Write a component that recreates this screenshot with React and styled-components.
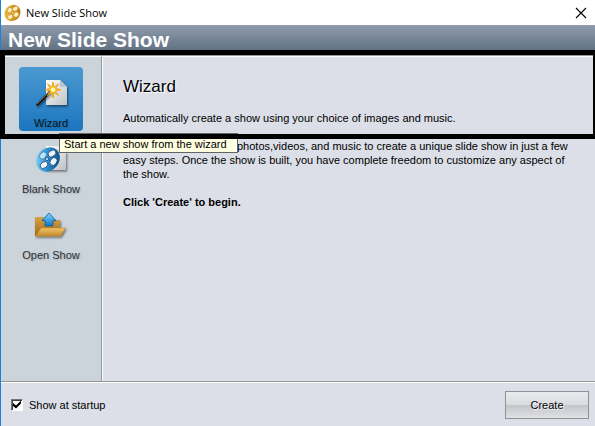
import React, { useState } from "react";
import styled, { createGlobalStyle } from "styled-components";

const Global = createGlobalStyle`
  * { box-sizing: border-box; }
  body { margin: 0; background: #dcdfe7; }
  button, input { font: inherit; }
`;

const Window = styled.div`
  min-height: 100vh;
  display: flex;
  flex-direction: column;
  border-left: 1px solid #1883d7;
  background: #dcdfe7;
  color: #000;
  font: 11px/14px "Liberation Sans", Arial, sans-serif;
`;

const TitleBar = styled.header`
  display: flex;
  align-items: center;
  height: 25px;
  padding: 0 8px 0 3px;
  gap: 5px;
  background: #fff;
  font: 11px/16px "Open Sans", "Noto Sans", sans-serif;
`;

const TitleText = styled.span`
  flex: 1;
`;

const CloseButton = styled.button`
  display: flex;
  padding: 0;
  border: 0;
  background: none;
`;

const Banner = styled.h1`
  margin: 0;
  height: 30px;
  padding: 2px 7px 0;
  background: linear-gradient(#8f9cac, #627284 25px);
  color: #fff;
  font-size: 21px;
  line-height: 26px;
`;

const Body = styled.div`
  position: relative;
  flex: 1;
  display: flex;
  border-top: 1px solid #969696;
  border-bottom: 1px solid #969696;
`;

const Sidebar = styled.nav`
  display: flex;
  flex-direction: column;
  align-items: center;
  gap: 2px;
  width: 101px;
  padding-top: 10px;
  border-top: 1px solid #fff;
  border-right: 1px solid #969696;
  background: #cbd3db;
`;

const NavButton = styled.button`
  display: flex;
  flex-direction: column;
  align-items: center;
  justify-content: space-between;
  width: 64px;
  height: 64px;
  padding: 11px 0 1px;
  border: 0;
  border-radius: 4px;
  background: ${(p) => (p.$active ? "linear-gradient(#4b99d2, #1b76bf)" : "none")};
  color: ${(p) => (p.$active ? "#0a1420" : "#2c3034")};
  white-space: nowrap;
  text-shadow: 1px 1px 2px rgba(0, 0, 0, 0.2);
`;

const Content = styled.main`
  flex: 1;
  padding: 20px 20px 0;
  border-top: 1px solid #fff;
  border-left: 1px solid #fff;
`;

const Heading = styled.h2`
  margin: 0;
  font-size: 17px;
  font-weight: 400;
  line-height: 20px;
  text-shadow: 1px 1px 1px #fff;
`;

const Paragraph = styled.p`
  margin: 14px 0 0;
  text-indent: ${(p) => p.$indent || 0}px;
  font-weight: ${(p) => (p.$strong ? 700 : 400)};
`;

const Highlight = styled.div`
  position: absolute;
  top: -6px;
  left: -1px;
  right: 0;
  height: 89px;
  border: 5px solid #000;
  border-right-width: 2px;
  pointer-events: none;
`;

const Tooltip = styled.div`
  position: absolute;
  top: 77px;
  left: 58px;
  min-width: 179px;
  height: 20px;
  padding: 3px 4px 0;
  border: 1px solid #646464;
  background: #ffffe1;
  white-space: nowrap;
`;

const Footer = styled.footer`
  display: flex;
  align-items: center;
  justify-content: space-between;
  height: 44px;
  padding: 0 6px 0 10px;
  border-top: 1px solid #fff;
`;

const CheckLabel = styled.label`
  display: flex;
  align-items: center;
  gap: 6px;
`;

const CheckBox = styled.input`
  appearance: none;
  width: 12px;
  height: 12px;
  margin: 0;
  border: 1px solid;
  border-color: #777 #fff #fff #777;
  outline: 0;
  background: #fff;
  box-shadow: inset 1px 1px #404040;
  display: grid;
  place-items: center;
  &:checked::before {
    content: "";
    width: 8px;
    height: 8px;
    background: #000;
    clip-path: polygon(0 30%, 38% 62%, 100% 0, 100% 38%, 38% 100%, 0 68%);
  }
`;

const CreateButton = styled.button`
  width: 84px;
  height: 28px;
  padding: 0;
  border: 1px solid #8e9297;
  background: linear-gradient(#e9eaed, #d9dbdf 50%, #c3c5ca 51%, #dfe1e5);
  text-shadow: 1px 1px 1px #fff;
`;

function ReelIcon() {
  return (
    <svg width="17" height="18" viewBox="0 0 17 18" aria-hidden="true">
      <defs>
        <linearGradient id="gold" x1="0" y1="0" x2="1" y2="1">
          <stop offset="0" stopColor="#f6c64a" />
          <stop offset="1" stopColor="#b06c0a" />
        </linearGradient>
      </defs>
      <ellipse cx="8.5" cy="9" rx="8.6" ry="7.6" transform="rotate(-50 8.5 9)" fill="url(#gold)" />
      <g fill="#fff0bd" stroke="#d2932a" strokeWidth=".4">
        <ellipse cx="5.8" cy="6.2" rx="2.1" ry="2.6" transform="rotate(35 5.8 6.2)" />
        <ellipse cx="11.3" cy="4.7" rx="2.8" ry="2.1" transform="rotate(-30 11.3 4.7)" />
        <ellipse cx="12.2" cy="10.6" rx="2.2" ry="2.7" transform="rotate(35 12.2 10.6)" />
        <ellipse cx="6.3" cy="12.8" rx="2.7" ry="2.1" transform="rotate(-30 6.3 12.8)" />
        <circle cx="8.8" cy="8.8" r=".9" />
      </g>
    </svg>
  );
}

function PagePaths({ x, y, w, h }) {
  return (
    <g filter="url(#shade)">
      <path d={`M${x} ${y}h${w - 7}l7 7v${h - 7}h-${w}z`} fill="url(#paper)" />
      <path d={`M${x + w - 7} ${y}v7h7z`} fill="#b9c4cf" />
    </g>
  );
}

function WizardIcon() {
  return (
    <svg width="36" height="32" viewBox="0 0 36 32" aria-hidden="true">
      <defs>
        <linearGradient id="paper" x1="0" y1="0" x2="1" y2="1">
          <stop offset="0" stopColor="#fff" />
          <stop offset="1" stopColor="#bfc1c3" />
        </linearGradient>
        <filter id="shade" x="-30%" y="-30%" width="170%" height="170%">
          <feDropShadow dx="1" dy="1.5" stdDeviation="1" floodOpacity=".5" />
        </filter>
      </defs>
      <PagePaths x={13} y={2} w={21} h={25} />
      <path d="M4.500 26.500 17 14" stroke="#161616" strokeWidth="2.600" strokeLinecap="round" filter="url(#shade)" />
      <path d="M4 26 16 14" stroke="#858585" strokeWidth=".8" />
      <path
        d="M20 4l1 5.200 4.500-3.200-2.900 4.500 5.400 1.200-5.400 1.200 2.900 4.600-4.500-3.200L20 20l-1-5.700-4.500 3.200 2.900-4.600-5.400-1.200 5.400-1.200L14.500 6 19 9.200z"
        fill="#fdc52c"
        stroke="#eda014"
        strokeWidth=".9"
      />
      <circle cx="20" cy="11.700" r="2.300" fill="#fff9b8" />
    </svg>
  );
}

function BlankIcon() {
  return (
    <svg width="36" height="32" viewBox="0 0 36 32" aria-hidden="true">
      <defs>
        <linearGradient id="blue" x1=".1" y1="0" x2=".9" y2="1">
          <stop offset="0" stopColor="#9adbf8" />
          <stop offset=".45" stopColor="#2f94d4" />
          <stop offset="1" stopColor="#063f7c" />
        </linearGradient>
      </defs>
      <PagePaths x={13} y={2} w={20} h={24} />
      <ellipse cx="15" cy="15.500" rx="13" ry="11" transform="rotate(-50 15 15.500)" fill="url(#blue)" />
      <ellipse cx="10" cy="11.500" rx="3" ry="4" transform="rotate(40 10 11.500)" fill="#bfe2f3" stroke="#1c74b4" strokeWidth=".7" />
      <g fill="#f1f3f5" stroke="#0b4c85" strokeWidth=".8">
        <ellipse cx="19" cy="9.500" rx="4.200" ry="3" transform="rotate(-35 19 9.500)" />
        <ellipse cx="20.500" cy="17.500" rx="3.200" ry="4.200" transform="rotate(35 20.500 17.500)" />
        <ellipse cx="11" cy="21" rx="4.200" ry="3" transform="rotate(-35 11 21)" />
      </g>
      <circle cx="14" cy="15" r="1.700" fill="#b7cfdd" stroke="#17568c" strokeWidth=".8" />
    </svg>
  );
}

function OpenIcon() {
  return (
    <svg width="36" height="32" viewBox="0 0 36 32" aria-hidden="true">
      <defs>
        <linearGradient id="folder" x1="0" y1="0" x2="0" y2="1">
          <stop offset="0" stopColor="#efc568" />
          <stop offset="1" stopColor="#c48a2c" />
        </linearGradient>
        <linearGradient id="back" x1="0" y1="0" x2="0" y2="1">
          <stop offset="0" stopColor="#d9a343" />
          <stop offset="1" stopColor="#9c681a" />
        </linearGradient>
        <linearGradient id="arrow" x1="0" y1="0" x2="0" y2="1">
          <stop offset="0" stopColor="#7ddcff" />
          <stop offset="1" stopColor="#1272c0" />
        </linearGradient>
      </defs>
      <g filter="url(#shade)">
        <path d="M2 7h8l2 3h15v16H2z" fill="url(#back)" />
        <path d="M2.500 26 8 18h24.500l-5 8z" fill="url(#folder)" stroke="#b57c22" strokeWidth=".5" />
      </g>
      <path d="m16 3 7 7.500h-3V16h-8v-5.500H9z" fill="url(#arrow)" stroke="#075a9c" strokeWidth=".8" />
    </svg>
  );
}

const shows = [
  { name: "Wizard", Icon: WizardIcon },
  { name: "Blank Show", Icon: BlankIcon },
  { name: "Open Show", Icon: OpenIcon },
];

export default function App() {
  const [startup, setStartup] = useState(true);
  return (
    <>
      <Global />
      <Window>
        <TitleBar>
          <ReelIcon />
          <TitleText>New Slide Show</TitleText>
          <CloseButton aria-label="Close">
            <svg width="12" height="12" viewBox="0 0 12 12" stroke="#000" strokeWidth="1.100">
              <path d="m1 1 10 10M11 1 1 11" />
            </svg>
          </CloseButton>
        </TitleBar>
        <Banner>New Slide Show</Banner>
        <Body>
          <Sidebar>
            {shows.map(({ name, Icon }) => (
              <NavButton key={name} $active={name === "Wizard"}>
                <Icon />
                {name}
              </NavButton>
            ))}
          </Sidebar>
          <Content>
            <Heading>Wizard</Heading>
            <Paragraph>Automatically create a show using your choice of images and music.</Paragraph>
            <Paragraph $indent={114}>
              photos,videos, and music to create a unique slide show in just a few
              <br />
              easy steps. Once the show is built, you have complete freedom to customize any aspect of
              <br />
              the show.
            </Paragraph>
            <Paragraph $strong>Click 'Create' to begin.</Paragraph>
          </Content>
          <Tooltip role="tooltip">Start a new show from the wizard</Tooltip>
          <Highlight />
        </Body>
        <Footer>
          <CheckLabel>
            <CheckBox type="checkbox" checked={startup} onChange={(e) => setStartup(e.target.checked)} />
            Show at startup
          </CheckLabel>
          <CreateButton>Create</CreateButton>
        </Footer>
      </Window>
    </>
  );
}
